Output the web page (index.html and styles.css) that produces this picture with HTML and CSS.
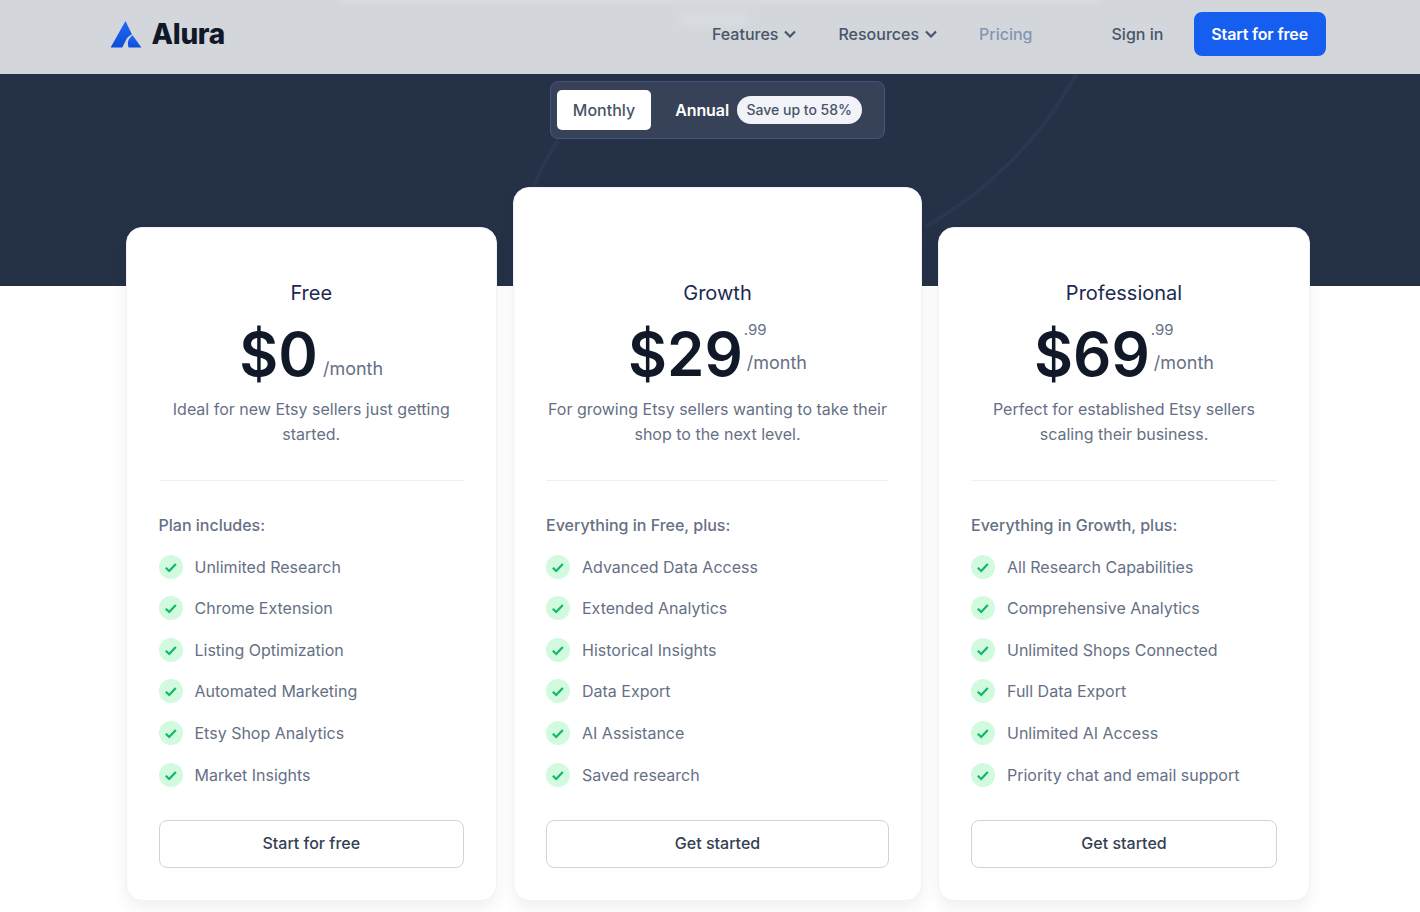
FILE: index.html
```html
<!DOCTYPE html>
<html lang="en">
<head>
    <meta charset="UTF-8">
    <title>Alura - Pricing</title>
    <link rel="stylesheet" href="styles.css">
</head>
<body>
    <header class="site-header">
        <div class="header-haze">
            <span class="haze-line"></span>
            <span class="haze-short"></span>
        </div>
        <a class="logo" href="#">
            <svg class="logo-mark" width="32" height="28" viewBox="0 0 32 28">
                <defs>
                    <linearGradient id="logo-fill" x1="0" y1="0" x2="0" y2="1">
                        <stop offset="0" stop-color="#2168f5"/>
                        <stop offset="1" stop-color="#0b4fd8"/>
                    </linearGradient>
                </defs>
                <path d="M15.5 1 L22 14.6 Q17.5 16.5 15.5 21 L12.3 27.4 L0.6 27.4 Z" fill="url(#logo-fill)"/>
                <path d="M22.6 15.2 L31.4 27.4 L18.6 27.4 Q17 23 18.8 19.6 Q20.2 17 22.6 15.2 Z" fill="url(#logo-fill)"/>
            </svg>
            <span class="logo-text">Alura</span>
        </a>
        <nav class="main-nav">
            <a class="nav-link" href="#">Features
                <svg class="chevron" width="12" height="8" viewBox="0 0 12 8"><path d="M1 1.5 L6 6.5 L11 1.5"/></svg>
            </a>
            <a class="nav-link" href="#">Resources
                <svg class="chevron" width="12" height="8" viewBox="0 0 12 8"><path d="M1 1.5 L6 6.5 L11 1.5"/></svg>
            </a>
            <a class="nav-link nav-current" href="#">Pricing</a>
        </nav>
        <div class="header-actions">
            <a class="sign-in" href="#">Sign in</a>
            <a class="cta-btn" href="#">Start for free</a>
        </div>
    </header>

    <main class="pricing">
        <div class="hero-band">
            <svg class="hero-lines" width="1420" height="212" viewBox="0 0 1420 212">
                <path d="M1076 0 C1050 50 1000 110 925 153"/>
                <path d="M558 66 C548 82 538 100 533 116"/>
            </svg>
        </div>

        <div class="billing-toggle">
            <button class="toggle-option active">Monthly</button>
            <div class="toggle-annual">
                <span class="annual-label">Annual</span>
                <span class="save-pill">Save up to 58%</span>
            </div>
        </div>

        <div class="plans">
            <section class="plan-card">
                <h2 class="plan-name">Free</h2>
                <div class="plan-price">
                    <span class="amount">$0</span>
                    <span class="price-side"><span class="per">/month</span></span>
                </div>
                <p class="plan-desc">Ideal for new Etsy sellers just getting started.</p>
                <div class="plan-features">
                    <h3 class="features-title">Plan includes:</h3>
                    <ul class="feature-list">
                        <li><svg class="check" viewBox="0 0 24 24"><circle cx="12" cy="12" r="12"/><path d="M6.8 12.8 L10.2 16 L16.8 9"/></svg>Unlimited Research</li>
                        <li><svg class="check" viewBox="0 0 24 24"><circle cx="12" cy="12" r="12"/><path d="M6.8 12.8 L10.2 16 L16.8 9"/></svg>Chrome Extension</li>
                        <li><svg class="check" viewBox="0 0 24 24"><circle cx="12" cy="12" r="12"/><path d="M6.8 12.8 L10.2 16 L16.8 9"/></svg>Listing Optimization</li>
                        <li><svg class="check" viewBox="0 0 24 24"><circle cx="12" cy="12" r="12"/><path d="M6.8 12.8 L10.2 16 L16.8 9"/></svg>Automated Marketing</li>
                        <li><svg class="check" viewBox="0 0 24 24"><circle cx="12" cy="12" r="12"/><path d="M6.8 12.8 L10.2 16 L16.8 9"/></svg>Etsy Shop Analytics</li>
                        <li><svg class="check" viewBox="0 0 24 24"><circle cx="12" cy="12" r="12"/><path d="M6.8 12.8 L10.2 16 L16.8 9"/></svg>Market Insights</li>
                    </ul>
                </div>
                <a class="plan-btn" href="#">Start for free</a>
            </section>

            <section class="plan-card plan-featured">
                <h2 class="plan-name">Growth</h2>
                <div class="plan-price">
                    <span class="amount">$29</span>
                    <span class="price-side"><span class="cents">.99</span><span class="per">/month</span></span>
                </div>
                <p class="plan-desc">For growing Etsy sellers wanting to take their shop to the next level.</p>
                <div class="plan-features">
                    <h3 class="features-title">Everything in Free, plus:</h3>
                    <ul class="feature-list">
                        <li><svg class="check" viewBox="0 0 24 24"><circle cx="12" cy="12" r="12"/><path d="M6.8 12.8 L10.2 16 L16.8 9"/></svg>Advanced Data Access</li>
                        <li><svg class="check" viewBox="0 0 24 24"><circle cx="12" cy="12" r="12"/><path d="M6.8 12.8 L10.2 16 L16.8 9"/></svg>Extended Analytics</li>
                        <li><svg class="check" viewBox="0 0 24 24"><circle cx="12" cy="12" r="12"/><path d="M6.8 12.8 L10.2 16 L16.8 9"/></svg>Historical Insights</li>
                        <li><svg class="check" viewBox="0 0 24 24"><circle cx="12" cy="12" r="12"/><path d="M6.8 12.8 L10.2 16 L16.8 9"/></svg>Data Export</li>
                        <li><svg class="check" viewBox="0 0 24 24"><circle cx="12" cy="12" r="12"/><path d="M6.8 12.8 L10.2 16 L16.8 9"/></svg>AI Assistance</li>
                        <li><svg class="check" viewBox="0 0 24 24"><circle cx="12" cy="12" r="12"/><path d="M6.8 12.8 L10.2 16 L16.8 9"/></svg>Saved research</li>
                    </ul>
                </div>
                <a class="plan-btn" href="#">Get started</a>
            </section>

            <section class="plan-card">
                <h2 class="plan-name">Professional</h2>
                <div class="plan-price">
                    <span class="amount">$69</span>
                    <span class="price-side"><span class="cents">.99</span><span class="per">/month</span></span>
                </div>
                <p class="plan-desc">Perfect for established Etsy sellers scaling their business.</p>
                <div class="plan-features">
                    <h3 class="features-title">Everything in Growth, plus:</h3>
                    <ul class="feature-list">
                        <li><svg class="check" viewBox="0 0 24 24"><circle cx="12" cy="12" r="12"/><path d="M6.8 12.8 L10.2 16 L16.8 9"/></svg>All Research Capabilities</li>
                        <li><svg class="check" viewBox="0 0 24 24"><circle cx="12" cy="12" r="12"/><path d="M6.8 12.8 L10.2 16 L16.8 9"/></svg>Comprehensive Analytics</li>
                        <li><svg class="check" viewBox="0 0 24 24"><circle cx="12" cy="12" r="12"/><path d="M6.8 12.8 L10.2 16 L16.8 9"/></svg>Unlimited Shops Connected</li>
                        <li><svg class="check" viewBox="0 0 24 24"><circle cx="12" cy="12" r="12"/><path d="M6.8 12.8 L10.2 16 L16.8 9"/></svg>Full Data Export</li>
                        <li><svg class="check" viewBox="0 0 24 24"><circle cx="12" cy="12" r="12"/><path d="M6.8 12.8 L10.2 16 L16.8 9"/></svg>Unlimited AI Access</li>
                        <li><svg class="check" viewBox="0 0 24 24"><circle cx="12" cy="12" r="12"/><path d="M6.8 12.8 L10.2 16 L16.8 9"/></svg>Priority chat and email support</li>
                    </ul>
                </div>
                <a class="plan-btn" href="#">Get started</a>
            </section>
        </div>
    </main>
</body>
</html>
```

FILE: styles.css
```css
* {
    box-sizing: border-box;
}
html, body {
    height: 912px;
    overflow: hidden;
}
body {
    margin: 0;
    font-family: Inter, "Liberation Sans", sans-serif;
    background: #fff;
    color: #4b5563;
}
a {
    text-decoration: none;
    color: inherit;
}

.site-header {
    position: relative;
    height: 74px;
    background: #d3d6db;
    display: flex;
    align-items: center;
    padding: 0 94px 6px 110px;
    overflow: hidden;
}
.header-haze {
    position: absolute;
    inset: 0;
    pointer-events: none;
    filter: blur(5px);
}
.haze-line {
    position: absolute;
    left: 340px;
    top: -8px;
    width: 760px;
    height: 10px;
    background: rgba(255,255,255,0.22);
}
.haze-short {
    position: absolute;
    left: 680px;
    top: 14px;
    width: 70px;
    height: 12px;
    background: rgba(255,255,255,0.16);
}
.logo {
    position: relative;
    display: flex;
    align-items: center;
    gap: 9.5px;
}
.logo-text {
    font-size: 28px;
    font-weight: 800;
    color: #111827;
    letter-spacing: -0.3px;
}
.main-nav {
    position: relative;
    display: flex;
    align-items: center;
    gap: 42px;
    margin-left: 487px;
}
.nav-link {
    display: flex;
    align-items: center;
    gap: 6px;
    font-size: 16px;
    font-weight: 500;
    color: #475569;
}
.nav-current {
    color: #8296b3;
}
.chevron {
    fill: none;
    stroke: #475569;
    stroke-width: 2.2;
}
.header-actions {
    position: relative;
    display: flex;
    align-items: center;
    gap: 31px;
    margin-left: auto;
}
.sign-in {
    font-size: 16px;
    font-weight: 500;
    color: #475569;
}
.cta-btn {
    display: block;
    padding: 0 18px 0 17px;
    height: 44px;
    line-height: 44px;
    background: #155eef;
    border-radius: 8px;
    color: #fff;
    font-size: 16px;
    font-weight: 600;
    letter-spacing: -0.15px;
}

.pricing {
    position: relative;
    padding-top: 7px;
}
.hero-band {
    position: absolute;
    left: 0;
    right: 0;
    top: 0;
    height: 212px;
    background: #243147;
}
.hero-lines {
    display: block;
    fill: none;
    stroke: #2a374e;
    stroke-width: 4;
}
.billing-toggle {
    position: relative;
    width: 335px;
    height: 58px;
    margin-left: 550px;
    padding: 0 22px 0 6px;
    display: flex;
    align-items: center;
    justify-content: space-between;
    background: #374259;
    border: 1px solid #43557a;
    border-radius: 8px;
}
.toggle-option {
    width: 94px;
    height: 40px;
    border: 0;
    border-radius: 5px;
    background: #fff;
    color: #475467;
    font-family: inherit;
    font-size: 16px;
    font-weight: 500;
}
.toggle-annual {
    display: flex;
    align-items: center;
    gap: 8px;
}
.annual-label {
    color: #fff;
    font-size: 16px;
    font-weight: 600;
    letter-spacing: -0.1px;
}
.save-pill {
    height: 28px;
    line-height: 28px;
    padding: 0 10px 0 9.5px;
    border-radius: 14px;
    background: #f1f3f9;
    color: #475467;
    font-size: 14px;
    font-weight: 500;
}

.plans {
    position: relative;
    display: grid;
    grid-template-columns: 371.5px 409px 372px;
    gap: 16px;
    align-items: end;
    width: 1184.5px;
    margin: 48px 0 0 125.5px;
}
.plan-card {
    height: 674px;
    padding: 51px 32px 32px;
    display: flex;
    flex-direction: column;
    background: #fff;
    border: 1px solid #f1f2f5;
    border-radius: 16px;
    box-shadow: 0 8px 16px rgba(17,24,39,0.06);
}
.plan-featured {
    height: 714px;
    padding-top: 91px;
}
.plan-name {
    margin: 0;
    text-align: center;
    font-size: 20px;
    line-height: 28px;
    font-weight: 400;
    color: #1c2a53;
}
.plan-price {
    display: flex;
    justify-content: center;
    margin-top: 15px;
    height: 64px;
}
.amount {
    font-size: 60px;
    line-height: 64px;
    font-weight: 600;
    color: #111827;
}
.price-side {
    display: flex;
    flex-direction: column;
    justify-content: flex-end;
    margin-left: 5px;
    color: #667085;
}
.per {
    font-size: 18px;
    line-height: 24px;
    margin-bottom: 5px;
}
.cents {
    font-size: 15px;
    line-height: 20px;
    margin-left: -4px;
    margin-bottom: 11px;
}
.cents + .per {
    margin-left: -1px;
    margin-bottom: 11px;
}
.plan-desc {
    margin: 11px 0 0;
    padding-bottom: 33px;
    text-align: center;
    font-size: 16px;
    line-height: 25px;
    color: #667085;
    border-bottom: 1px solid #eef0f3;
}
.plan-features {
    flex: 1;
    padding-top: 34px;
}
.features-title {
    margin: 0;
    font-size: 16px;
    line-height: 20px;
    font-weight: 500;
    color: #667085;
}
.feature-list {
    list-style: none;
    margin: 19.6px 0 0;
    padding: 0;
}
.feature-list li {
    display: flex;
    align-items: center;
    gap: 12px;
    height: 24px;
    margin-bottom: 17.6px;
    font-size: 16px;
    color: #667085;
}
.check {
    width: 24px;
    height: 24px;
    flex: none;
}
.check circle {
    fill: #d1fadf;
}
.check path {
    fill: none;
    stroke: #12b76a;
    stroke-width: 2.2;
}
.plan-btn {
    display: block;
    height: 48px;
    line-height: 44px;
    text-align: center;
    background: #fff;
    border: 1px solid #d0d5dd;
    border-radius: 8px;
    font-size: 16px;
    font-weight: 500;
    color: #344054;
}
```
